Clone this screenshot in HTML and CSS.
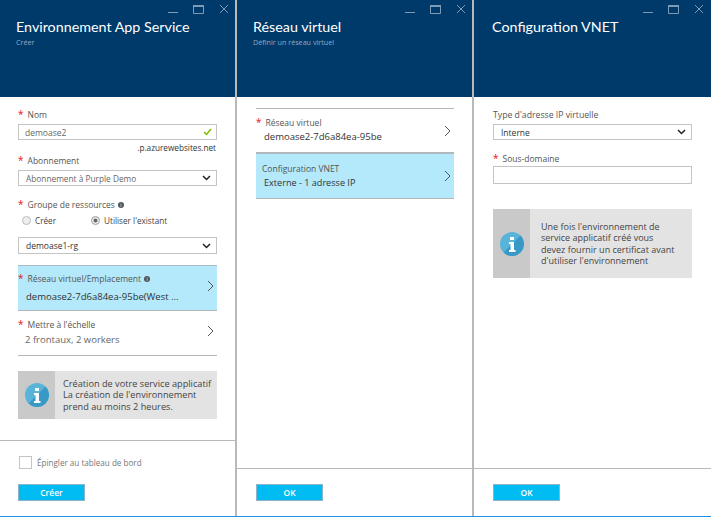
FILE: index.html
```html
<!DOCTYPE html>
<html lang="fr">
<head>
    <meta charset="UTF-8">
    <meta name="viewport" content="width=device-width, initial-scale=1.0">
    <title>Environnement App Service</title>
    <link rel="stylesheet" href="styles.css">
</head>
<body>
    <svg class="defs" width="0" height="0">
        <symbol id="min" viewBox="0 0 10 10"><path d="M0 8.5h10" stroke="#7f9cb6" fill="none"/></symbol>
        <symbol id="max" viewBox="0 0 11 10"><path d="M.5 1.500h10v8H.5z" stroke="#7f9cb6" fill="none"/><path d="M0 1h11v2H0z" fill="#7f9cb6"/></symbol>
        <symbol id="close" viewBox="0 0 10 10"><path d="M1 1l8 8M9 1l-8 8" stroke="#7f9cb6" fill="none"/></symbol>
        <symbol id="chev" viewBox="0 0 7 12"><path d="M1 1l5 5-5 5" stroke="#555" fill="none"/></symbol>
        <symbol id="down" viewBox="0 0 9 6"><path d="M1 1l3.500 3.500L8 1" stroke="#222" stroke-width="1.500" fill="none"/></symbol>
        <symbol id="info" viewBox="0 0 24 24">
            <circle cx="12" cy="12" r="12" fill="#59b4d9"/>
            <path d="M20.500 3.500A12 12 0 0 1 3.500 20.500z" fill="#3999c6"/>
            <path d="M10 5h4v3h-4zM9 10h5v8h1.500v2h-6.500v-2h1.500v-6H9z" fill="#fff"/>
        </symbol>
    </svg>

    <div class="blades">
        <!-- Environnement -->
        <section class="blade">
            <header class="blade-head">
                <div class="controls">
                    <svg class="ctl-min"><use href="#min"/></svg>
                    <svg class="ctl-max"><use href="#max"/></svg>
                    <svg class="ctl-close"><use href="#close"/></svg>
                </div>
                <h1>Environnement App Service</h1>
                <p class="sub">Créer</p>
            </header>
            <div class="blade-body body-one">
                <div class="label"><span class="req">*</span>Nom</div>
                <div class="field valid">
                    <span>demoase2</span>
                    <svg class="check" width="9" height="8" viewBox="0 0 9 8"><path d="M1 4l2.500 2.500L8 1" stroke="#7fba00" stroke-width="1.500" fill="none"/></svg>
                </div>
                <div class="suffix">.p.azurewebsites.net</div>
                <div class="label label-sub-one"><span class="req">*</span>Abonnement</div>
                <div class="field select muted"><span>Abonnement à Purple Demo</span><svg class="caret"><use href="#down"/></svg></div>
                <div class="label label-group"><span class="req">*</span>Groupe de ressources<span class="dot">i</span></div>
                <div class="radios">
                    <span class="radio-item radio-first"><i class="radio"></i>Créer</span>
                    <span class="radio-item"><i class="radio on"></i>Utiliser l'existant</span>
                </div>
                <div class="field select field-tall"><span>demoase1-rg</span><svg class="caret"><use href="#down"/></svg></div>

                <div class="item active item-location">
                    <div class="item-text">
                        <div class="label"><span class="req">*</span>Réseau virtuel/Emplacement<span class="dot">i</span></div>
                        <div class="value location-value">demoase2-7d6a84ea-95be(West ...</div>
                    </div>
                    <svg class="chev chev-up"><use href="#chev"/></svg>
                </div>
                <div class="item item-scale">
                    <div class="item-text">
                        <div class="label"><span class="req">*</span>Mettre à l'échelle</div>
                        <div class="value scale-value">2 frontaux, 2 workers</div>
                    </div>
                    <svg class="chev chev-up"><use href="#chev"/></svg>
                </div>

                <div class="notice notice-one">
                    <div class="notice-icon"><svg><use href="#info"/></svg></div>
                    <p>Création de votre service applicatif<br>La création de l'environnement<br>prend au moins 2 heures.</p>
                </div>
            </div>
            <footer class="blade-foot foot-one">
                <div class="pin"><i class="box"></i>Épingler au tableau de bord</div>
                <button class="btn" type="button">Créer</button>
            </footer>
        </section>

        <!-- Reseau virtuel -->
        <section class="blade">
            <header class="blade-head">
                <div class="controls">
                    <svg class="ctl-min"><use href="#min"/></svg>
                    <svg class="ctl-max"><use href="#max"/></svg>
                    <svg class="ctl-close"><use href="#close"/></svg>
                </div>
                <h1>Réseau virtuel</h1>
                <p class="sub">Définir un réseau virtuel</p>
            </header>
            <div class="blade-body body-two">
                <div class="item item-vnet">
                    <div class="item-text">
                        <div class="label"><span class="req">*</span>Réseau virtuel</div>
                        <div class="value">demoase2-7d6a84ea-95be</div>
                    </div>
                    <svg class="chev"><use href="#chev"/></svg>
                </div>
                <div class="item active item-config">
                    <div class="item-text">
                        <div class="label config-label">Configuration VNET</div>
                        <div class="value config-value">Externe - 1 adresse IP</div>
                    </div>
                    <svg class="chev"><use href="#chev"/></svg>
                </div>
            </div>
            <footer class="blade-foot">
                <button class="btn" type="button">OK</button>
            </footer>
        </section>

        <!-- Configuration VNET -->
        <section class="blade">
            <header class="blade-head">
                <div class="controls">
                    <svg class="ctl-min"><use href="#min"/></svg>
                    <svg class="ctl-max"><use href="#max"/></svg>
                    <svg class="ctl-close"><use href="#close"/></svg>
                </div>
                <h1>Configuration VNET</h1>
            </header>
            <div class="blade-body body-three">
                <div class="label label-type">Type d'adresse IP virtuelle</div>
                <div class="field select"><span>Interne</span><svg class="caret"><use href="#down"/></svg></div>
                <div class="label label-sub"><span class="req">*</span>Sous-domaine</div>
                <div class="field empty"></div>
                <div class="notice notice-three">
                    <div class="notice-icon"><svg><use href="#info"/></svg></div>
                    <p>Une fois l'environnement de<br>service applicatif créé vous<br>devez fournir un certificat avant<br>d'utiliser l'environnement</p>
                </div>
            </div>
            <footer class="blade-foot">
                <button class="btn" type="button">OK</button>
            </footer>
        </section>
    </div>
</body>
</html>
```

FILE: styles.css
```css
* {
    box-sizing: border-box;
}

body {
    margin: 0;
    font-family: "Open Sans", "Noto Sans", sans-serif;
    font-size: 8.5px;
    color: #444;
    background-color: #fff;
}

.defs {
    display: block;
    height: 0;
}

.blades {
    display: flex;
    height: 517px;
    border-bottom: 1px solid #1e8fe1;
}

.blade {
    flex: 0 0 237px;
    display: flex;
    flex-direction: column;
    border-right: 2px solid #b9b9b9;
}

.blade:last-child {
    flex: 1;
    border-right: none;
}

.blade-head {
    height: 97px;
    padding: 4px 6px 0 16px;
    background-color: #003a6b;
    color: #fff;
}

.blade:last-child .blade-head {
    padding: 4px 7px 0 18px;
}

.blade-head h1 {
    margin: 0;
    font-family: Lato, "Open Sans", sans-serif;
    font-size: 14.3px;
    font-weight: 400;
    line-height: 20px;
}

.sub {
    margin: 0;
    font-size: 7.2px;
    line-height: 10px;
    color: #8fa9c2;
}

.controls {
    display: flex;
    justify-content: flex-end;
    height: 13px;
    gap: 15px;
}

.ctl-min {
    width: 10px;
    height: 10px;
}

.ctl-max {
    width: 11px;
    height: 10px;
}

.ctl-close {
    width: 10px;
    height: 10px;
}

.blade-body {
    flex: 1;
    padding: 0 18px;
}

.body-one {
    padding-top: 12px;
}

.body-two {
    padding: 11px 18px 0 19px;
}

.body-three {
    padding: 12px 19px 0 19px;
}

.label {
    font-size: 8.5px;
    line-height: 12px;
    color: #555;
}

.blade-body > .label {
    margin-bottom: 3px;
}

.req {
    color: #e81123;
    font-size: 10px;
    line-height: 0;
    margin-right: 4px;
}

.dot {
    display: inline-block;
    width: 6px;
    height: 6px;
    margin-left: 3px;
    border-radius: 50%;
    background-color: #555;
    color: #fff;
    font-size: 5px;
    line-height: 6px;
    text-align: center;
    vertical-align: 1px;
}

.field {
    display: flex;
    justify-content: space-between;
    align-items: center;
    height: 16px;
    padding: 0 5px 0 6px;
    border: 1px solid #c4c4c4;
    font-size: 8.5px;
    color: #333;
}

.field.valid {
    color: #666;
    margin-bottom: 2px;
}

.field.muted {
    color: #666;
    font-size: 8.3px;
}

.check {
    margin-right: -1px;
}

.suffix {
    font-size: 8.2px;
    line-height: 11px;
    text-align: right;
    padding-right: 1px;
    color: #333;
}

.label-sub-one {
    margin-top: 2px;
}

.select {
    padding-left: 7px;
}

.caret {
    width: 9px;
    height: 6px;
}

.blade-body > .label-group {
    margin-top: 13px;
    margin-bottom: 1px;
}

.radios {
    display: flex;
    height: 16px;
    padding-left: 4px;
    align-items: center;
    margin-bottom: 9px;
    font-size: 8.2px;
}

.radio-item {
    display: flex;
    align-items: center;
    gap: 4px;
}

.radio-first {
    width: 69px;
}

.radio {
    width: 9px;
    height: 9px;
    border: 1px solid #bbb;
    border-radius: 50%;
    background-color: #eee;
}

.radio.on {
    background-color: #666;
    box-shadow: inset 0 0 0 1.500px #eee;
}

.field-tall {
    height: 17px;
}

.item {
    display: flex;
    justify-content: space-between;
    align-items: center;
    padding-right: 3px;
    border-bottom: 1px solid #b5b5b5;
}

.item-text {
    flex: 1;
}

.value {
    font-size: 9.5px;
    line-height: 15px;
    padding-left: 8px;
    color: #333;
}

.active {
    background-color: #b3e9fa;
    border-top: 1px solid #a8bcc4;
}

.item-location {
    height: 46px;
    margin-top: 11px;
}

.location-value {
    margin-top: 4px;
}

.item-scale {
    height: 45px;
}

.scale-value {
    margin-top: 1px;
    padding-left: 7px;
    color: #666;
}

.chev {
    width: 7px;
    height: 12px;
    flex-shrink: 0;
}

.chev-up {
    margin-bottom: 4px;
}

.notice {
    display: flex;
    background-color: #e3e3e3;
}

.notice-icon {
    flex: 0 0 37px;
    display: flex;
    align-items: center;
    justify-content: center;
    background-color: #c9c9c9;
}

.notice-icon svg {
    width: 24px;
    height: 24px;
}

.notice p {
    margin: 0;
    align-self: center;
    padding-left: 8px;
    font-size: 9.2px;
    line-height: 11.500px;
    color: #444;
}

.notice-one {
    height: 48px;
    margin-top: 15px;
}

.item-vnet {
    height: 45px;
    border-top: 1px solid #b5b5b5;
}

.item-config {
    height: 46px;
}

.config-label {
    padding-left: 6px;
}

.config-value {
    font-size: 9.1px;
}

.label-type {
    font-size: 8.7px;
}

.blade-body > .label-sub {
    margin-top: 13px;
    margin-bottom: 1px;
}

.empty {
    height: 18px;
}

.notice-three {
    height: 69px;
    margin-top: 25px;
}

.notice-three p {
    padding-left: 11px;
    font-size: 9px;
}

.blade-foot {
    height: 48px;
    padding: 15px 0 0 19px;
    border-top: 1px solid #b9b9b9;
}

.foot-one {
    height: 76px;
    padding-left: 18px;
}

.pin {
    display: flex;
    align-items: center;
    height: 13px;
    margin-bottom: 15px;
    padding-left: 1px;
    gap: 5px;
    color: #777;
    font-size: 8.1px;
}

.box {
    width: 13px;
    height: 13px;
    border: 1px solid #c4c4c4;
}

.btn {
    display: block;
    width: 67px;
    height: 17px;
    padding: 0;
    border: 1px solid #8cb5c9;
    background-color: #00bcf2;
    color: #fff;
    font-family: inherit;
    font-size: 8.5px;
    font-weight: 600;
}
```
